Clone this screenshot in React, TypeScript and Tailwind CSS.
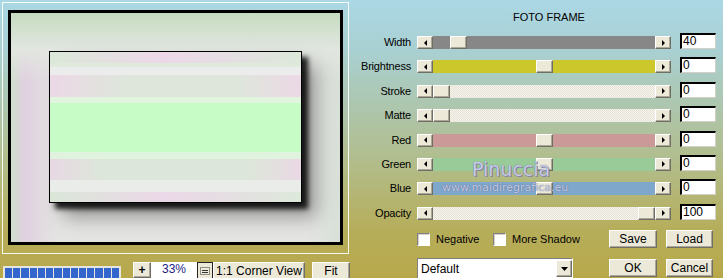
import React from 'react';

const raised =
  'bg-[#ece9d8] border border-t-white border-l-white border-r-[#716f64] border-b-[#716f64] shadow-[inset_-1px_-1px_0_#aca899]';
const dither =
  'bg-[repeating-conic-gradient(#f7f5ee_0_25%,#e4e1d6_0_50%)] bg-[length:2px_2px]';

type Row = { label: string; value: string; track: string; pos: string };

const rows: Row[] = [
  { label: 'Width', value: '40', track: 'bg-[#878787]', pos: 'ml-[17px]' },
  { label: 'Brightness', value: '0', track: 'bg-[#ccc82c]', pos: 'ml-[103px]' },
  { label: 'Stroke', value: '0', track: dither, pos: 'ml-0' },
  { label: 'Matte', value: '0', track: dither, pos: 'ml-0' },
  { label: 'Red', value: '0', track: 'bg-[#cc9999]', pos: 'ml-[103px]' },
  { label: 'Green', value: '0', track: 'bg-[#99cb98]', pos: 'ml-[103px]' },
  { label: 'Blue', value: '0', track: 'bg-[#7fa7cc]', pos: 'ml-[103px]' },
  { label: 'Opacity', value: '100', track: dither, pos: 'ml-[205px]' },
];

function Arrow({ dir }: { dir: 'left' | 'right' | 'down' }) {
  const pts = dir === 'left' ? '4,0 4,6 1,3' : dir === 'right' ? '1,0 1,6 4,3' : '0,1 7,1 3.5,5';
  return (
    <svg width={dir === 'down' ? 7 : 5} height="6" viewBox={dir === 'down' ? '0 0 7 6' : '0 0 5 6'}>
      <polygon points={pts} fill="#000" />
    </svg>
  );
}

function SliderRow({ row }: { row: Row }) {
  return (
    <div className="flex items-start h-[24.4px]">
      <div className="w-[56px] text-right mt-[3px] leading-[13px] tracking-[-0.2px]">{row.label}</div>
      <div className="flex ml-[6px] mt-[3px] h-[13px] w-[254px]">
        <div className={`${raised} w-[16px] h-[13px] flex items-center justify-center`}>
          <Arrow dir="left" />
        </div>
        <div className={`flex-1 h-[13px] ${row.track}`}>
          <div className={`${raised} ${row.pos} w-[17px] h-[13px]`} />
        </div>
        <div className={`${raised} w-[16px] h-[13px] flex items-center justify-center`}>
          <Arrow dir="right" />
        </div>
      </div>
      <div className="ml-[9px] w-[36px] h-[16px] bg-white border-t-2 border-l-2 border-r border-b border-t-black border-l-black border-r-[#d4d0c8] border-b-[#d4d0c8] pl-[1px] text-[12px] leading-[13px]">
        {row.value}
      </div>
    </div>
  );
}

function Checkbox({ label }: { label: string }) {
  return (
    <div className="flex items-center gap-[6px]">
      <div className="w-[13px] h-[13px] bg-white border border-t-[#808080] border-l-[#808080] border-r-white border-b-white shadow-[inset_1px_1px_0_#d4d0c8]" />
      <span>{label}</span>
    </div>
  );
}

export default function App() {
  return (
    <div className="relative w-[723px] h-[278px] overflow-hidden flex font-['Liberation_Sans',Arial,sans-serif] text-[11px] text-black bg-[linear-gradient(to_bottom,#abd8e5_0%,#a9d0d2_18%,#adc6ae_38%,#b2bc88_60%,#b6ae5c_82%,#b8a84a_100%)]">
      {/* Preview */}
      <div className="w-[355px] shrink-0">
        <div className="ml-[2px] mt-[2px] w-[347px] h-[252px] border border-white/90 pl-[5px] pt-[7px]">
          <div className="w-[335px] h-[235px] border-[3px] border-black overflow-hidden pl-[38px] pt-[38px] bg-[#e4e4e2] bg-[linear-gradient(to_bottom,#c6dcc0,#e2e6e0_16%,transparent_30%),linear-gradient(to_right,#cfe0cc,#e0d0e0_4%,#e4e4e2_14%,#e4e4e2_90%,#d8e0d8)]">
            <div className="w-[253px] h-[152px] border border-black flex flex-col shadow-[6px_6px_5px_rgba(0,0,0,0.85),14px_14px_18px_rgba(0,0,0,0.35)]">
              <div className="h-[11px] bg-[linear-gradient(to_right,#dbe8d8,#ecd8e8_45%,#e6dde4_65%,#dde8da)]" />
              <div className="h-[4px] bg-[#dfeadc]" />
              <div className="h-[8px] bg-[#ebeceb]" />
              <div className="h-[22px] bg-[linear-gradient(to_right,#ecd8e6,#dee6db_30%,#dee6db_75%,#ecd8e6)]" />
              <div className="h-[6px] bg-[#e0f4de]" />
              <div className="h-[49px] bg-[#c8fcc6]" />
              <div className="h-[7px] bg-[#e0f3de]" />
              <div className="h-[21px] bg-[linear-gradient(to_right,#e8d8e4,#dde6da_20%,#dde6da_80%,#ead8e4)]" />
              <div className="h-[12px] bg-[#eaecea]" />
              <div className="flex-1 bg-[linear-gradient(to_right,#dae6d8,#ecd8e8_45%,#e6dde4_65%,#dde8da)]" />
            </div>
          </div>
        </div>
        <div className="flex items-start mt-[8px]">
          <div className="ml-[3px] mt-[4px] w-[118px] h-[14px] border border-[#e6e4dc] bg-[#e8e6dc] p-[1px] flex gap-[1px]">
            {Array.from({ length: 14 }).map((_, i) => (
              <div key={i} className="flex-1 bg-[#3366cc]" />
            ))}
          </div>
          <div className={`${raised} ml-[12px] w-[18px] h-[16px] flex items-center justify-center font-bold text-[12px] leading-none`}>+</div>
          <div className="w-[46px] h-[16px] bg-white text-[#1c1c80] text-[12px] text-center leading-[14px]">33%</div>
          <div className="w-[16px] h-[17px] border border-[#222] bg-[#ece9d8] flex items-center justify-center">
            <svg width="10" height="8" viewBox="0 0 10 8">
              <rect x="0.5" y="0.5" width="9" height="7" fill="none" stroke="#333" strokeDasharray="1 1" />
              <line x1="2" y1="3.5" x2="8" y2="3.5" stroke="#333" />
              <line x1="2" y1="5.5" x2="8" y2="5.5" stroke="#333" />
            </svg>
          </div>
          <div className={`${raised} w-[92px] h-[18px] text-center text-[12px] leading-[16px]`}>1:1 Corner View</div>
          <div className={`${raised} ml-[7px] w-[38px] h-[18px] text-center text-[12px] leading-[16px]`}>Fit</div>
        </div>
      </div>

      {/* Controls */}
      <div className="flex-1">
        <div className="ml-[62px] w-[264px] h-[33px] pt-[11px] text-center leading-[12px]">FOTO FRAME</div>
        {rows.map(r => (
          <SliderRow key={r.label} row={r} />
        ))}
        <div className="flex ml-[62px] mt-[2px]">
          <div className="w-[192px]">
            <div className="flex items-center h-[18px]">
              <div className="w-[76px] overflow-hidden">
                <Checkbox label="Negative" />
              </div>
              <Checkbox label="More Shadow" />
            </div>
            <div className="mt-[10px] w-[156px] h-[21px] bg-white border border-t-[#808080] border-l-[#808080] border-r-white border-b-white flex items-center">
              <span className="flex-1 pl-[3px] text-[12px]">Default</span>
              <div className={`${raised} w-[16px] h-[17px] flex items-center justify-center`}>
                <Arrow dir="down" />
              </div>
            </div>
          </div>
          <div className="grid grid-cols-[48px_47px] gap-x-[9px] gap-y-[8px]">
            <div className={`${raised} h-[18px] text-center text-[12px] leading-[16px]`}>Save</div>
            <div className={`${raised} h-[18px] text-center text-[12px] leading-[16px]`}>Load</div>
            <div className={`${raised} h-[18px] text-center text-[12px] leading-[16px]`}>OK</div>
            <div className={`${raised} h-[18px] text-center text-[12px] leading-[16px]`}>Cancel</div>
          </div>
        </div>
      </div>

      {/* watermark */}
      <div className="absolute left-[472px] top-[160px] text-[19px] leading-[18px] text-[#c9cbe6] font-['DejaVu_Sans',sans-serif] [text-shadow:0_0_1px_#5a5a80,1px_1px_0_#8888aa]">
        Pinuccia
      </div>
      <div className="absolute left-[442px] top-[182px] text-[11px] leading-[11px] text-[#c6cce4] font-['DejaVu_Sans',sans-serif] [text-shadow:0_0_1px_#50507a]">
        www.maidiregrafica.eu
      </div>
    </div>
  );
}
